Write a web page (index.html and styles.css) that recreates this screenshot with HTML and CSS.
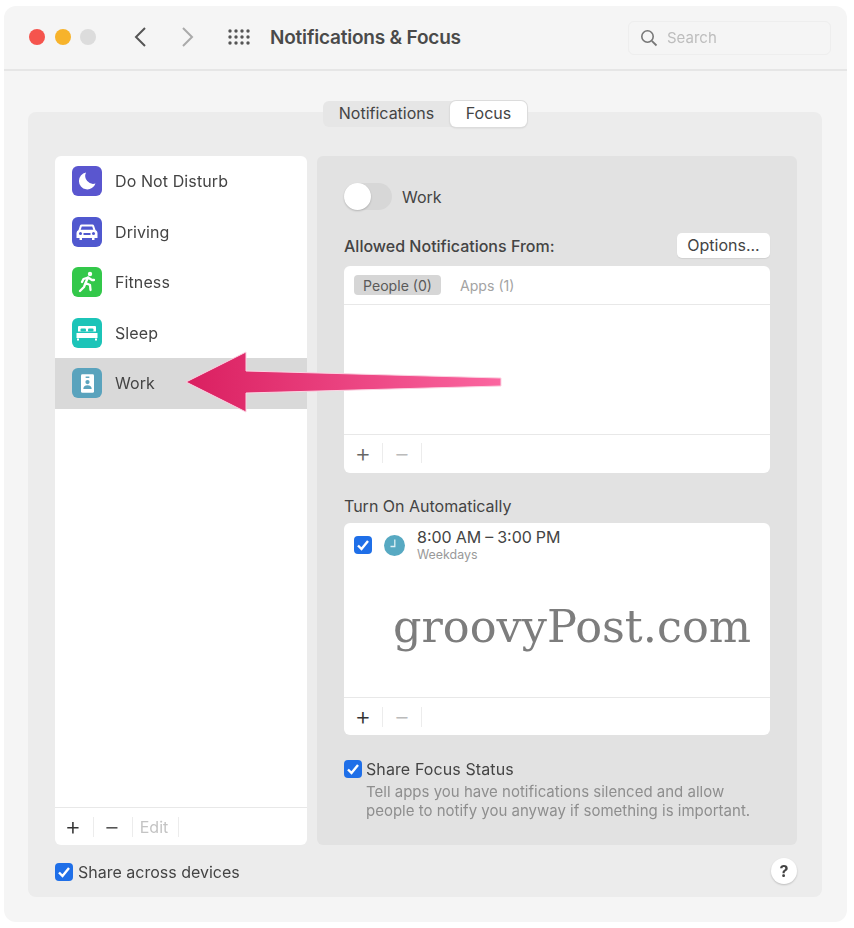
FILE: index.html
```html
<!DOCTYPE html>
<html lang="en">
<head>
<meta charset="utf-8">
<title>Notifications &amp; Focus</title>
<link rel="stylesheet" href="styles.css">
</head>
<body>
<div class="window">
  <header class="titlebar">
    <div class="lights"><i class="light red"></i><i class="light yellow"></i><i class="light gray"></i></div>
    <svg class="chev" width="14" height="22" viewBox="0 0 14 22"><path d="M12 2 L3 11 L12 20" fill="none" stroke="#555" stroke-width="2"/></svg>
    <svg class="chev fwd" width="14" height="22" viewBox="0 0 14 22"><path d="M2 2 L11 11 L2 20" fill="none" stroke="#aaa" stroke-width="2"/></svg>
    <svg class="grid" width="24" height="18" viewBox="0 0 24 18" fill="#555">
      <circle cx="3" cy="3" r="1.7"/><circle cx="9" cy="3" r="1.7"/><circle cx="15" cy="3" r="1.7"/><circle cx="21" cy="3" r="1.7"/>
      <circle cx="3" cy="9" r="1.7"/><circle cx="9" cy="9" r="1.7"/><circle cx="15" cy="9" r="1.7"/><circle cx="21" cy="9" r="1.7"/>
      <circle cx="3" cy="15" r="1.7"/><circle cx="9" cy="15" r="1.7"/><circle cx="15" cy="15" r="1.7"/><circle cx="21" cy="15" r="1.7"/>
    </svg>
    <h1 class="title">Notifications &amp; Focus</h1>
    <div class="search">
      <svg width="18" height="18" viewBox="0 0 18 18"><circle cx="7.5" cy="7.5" r="5.7" fill="none" stroke="#777" stroke-width="1.6"/><path d="M11.8 11.8 L16.5 16.5" stroke="#777" stroke-width="1.8"/></svg>
      <span>Search</span>
    </div>
  </header>
  <main class="content">
    <div class="panel">
      <div class="tabs"><span class="tab">Notifications</span><span class="tab active">Focus</span></div>
      <div class="columns">
        <aside class="sidebar">
          <ul class="focus-list">
            <li class="row">
              <span class="app-icon purple"><svg width="20" height="20" viewBox="0 0 20 20"><path d="M9 1.5 A8.5 8.5 0 1 0 18.5 12.5 A8 8 0 0 1 9 1.5Z" fill="#fff"/></svg></span>Do Not Disturb
            </li>
            <li class="row">
              <span class="app-icon indigo"><svg width="22" height="18" viewBox="0 0 22 18"><path d="M5.5 1.5 H16.5 Q17.6 1.5 18 2.6 L19.5 7 Q21.5 8 21.5 10 V15 H18.5 V17 H16 V15 H6 V17 H3.5 V15 H.5 V10 Q.5 8 2.5 7 L4 2.6 Q4.4 1.5 5.5 1.5Z M5.8 3.5 L4.7 6.8 H17.3 L16.2 3.5Z" fill="#fff" fill-rule="evenodd"/><circle cx="4.5" cy="10.5" r="1.5" fill="#5058cf"/><circle cx="17.5" cy="10.5" r="1.5" fill="#5058cf"/><rect x="7.5" y="10" width="7" height="2" fill="#5058cf"/></svg></span>Driving
            </li>
            <li class="row">
              <span class="app-icon green"><svg width="20" height="22" viewBox="0 0 20 22"><circle cx="13" cy="3" r="2.2" fill="#fff"/><path d="M11 6.5 L8.5 12 M11 6.5 L15 9 L17 9 M11 6.5 L6.500 8 L5 11 M8.5 12 L13 14 L13.5 19 M8.5 12 L7 16 L3 20" fill="none" stroke="#fff" stroke-width="2.300" stroke-linecap="round" stroke-linejoin="round"/></svg></span>Fitness
            </li>
            <li class="row">
              <span class="app-icon teal"><svg width="22" height="16" viewBox="0 0 22 16"><path d="M3 1 H19 Q20 1 20 2 V6.5 H2 V2 Q2 1 3 1Z M.5 8 H21.5 V13 H.5Z M1 13.5 H3 V15.5 H1Z M19 13.5 H21 V15.5 H19Z" fill="#fff"/><rect x="4.5" y="3.5" width="5.5" height="3" rx="1" fill="#1cc4b8"/><rect x="12" y="3.5" width="5.5" height="3" rx="1" fill="#1cc4b8"/></svg></span>Sleep
            </li>
            <li class="row selected">
              <span class="app-icon slate"><svg width="13" height="19" viewBox="0 0 14 20"><rect width="14" height="20" rx="1.5" fill="#fff"/><rect x="5" y="2.5" width="4" height="1.5" fill="#5aa3bd"/><circle cx="7" cy="8.5" r="2.3" fill="#5aa3bd"/><path d="M2.5 16 Q2.5 11.8 7 11.8 Q11.5 11.8 11.5 16Z" fill="#5aa3bd"/></svg></span>Work
            </li>
          </ul>
          <footer class="toolbar side-toolbar">
            <span class="tool plus">+</span><i class="sep"></i>
            <span class="tool minus">&minus;</span><i class="sep"></i>
            <span class="tool edit">Edit</span><i class="sep"></i>
          </footer>
        </aside>
        <section class="detail">
          <div class="switch-row"><span class="switch"><i class="knob"></i></span><span>Work</span></div>
          <div class="allowed-head"><span class="strong">Allowed Notifications From:</span><button class="options">Options...</button></div>
          <div class="card people-card">
            <div class="card-tabs"><span class="pill">People (0)</span><span class="pill-off">Apps (1)</span></div>
            <div class="card-body"></div>
            <footer class="toolbar card-toolbar">
              <span class="tool plus soft">+</span><i class="sep"></i>
              <span class="tool minus off">&minus;</span><i class="sep"></i>
            </footer>
          </div>
          <div class="auto-head">Turn On Automatically</div>
          <div class="card auto-card">
            <div class="schedule">
              <svg class="check" width="18" height="18" viewBox="0 0 18 18"><rect width="18" height="18" rx="4" fill="#1f6fe8"/><path d="M4 9.5 L7.5 13 L14 5" fill="none" stroke="#fff" stroke-width="2.4"/></svg>
              <svg class="clock" width="21" height="21" viewBox="0 0 21 21"><circle cx="10.5" cy="10.5" r="10.5" fill="#57a9c2"/><path d="M10.8 4.5 V11.5 H6.5" fill="none" stroke="#dff0f5" stroke-width="1.3"/></svg>
              <div class="sched-text"><div class="sched-time">8:00 AM – 3:00 PM</div><div class="sched-days">Weekdays</div></div>
            </div>
            <div class="card-body"></div>
            <footer class="toolbar card-toolbar short">
              <span class="tool plus">+</span><i class="sep"></i>
              <span class="tool minus off">&minus;</span><i class="sep"></i>
            </footer>
          </div>
          <div class="share-focus">
            <svg class="check" width="18" height="18" viewBox="0 0 18 18"><rect width="18" height="18" rx="4" fill="#1f6fe8"/><path d="M4 9.5 L7.5 13 L14 5" fill="none" stroke="#fff" stroke-width="2.4"/></svg>
            <div>
              <div class="share-title">Share Focus Status</div>
              <p class="share-desc">Tell apps you have notifications silenced and allow<br>people to notify you anyway if something is important.</p>
            </div>
          </div>
        </section>
      </div>
      <div class="bottom">
        <label class="across">
          <svg class="check" width="18" height="18" viewBox="0 0 18 18"><rect width="18" height="18" rx="4" fill="#1f6fe8"/><path d="M4 9.5 L7.5 13 L14 5" fill="none" stroke="#fff" stroke-width="2.4"/></svg>
          Share across devices
        </label>
        <span class="help">?</span>
      </div>
    </div>
  </main>
</div>
<div class="watermark">groovyPost.com</div>
<svg class="arrow" width="330" height="70" viewBox="180 347 330 70">
  <defs><linearGradient id="arrowFill" x1="0" x2="1" y1="0" y2="0"><stop offset="0" stop-color="#da1f60"/><stop offset="1" stop-color="#fb66a0"/></linearGradient></defs>
  <path d="M186 382 L246 352 V371 L501 378 V386 L246 393 V412 Z" fill="url(#arrowFill)" stroke="#fbd3e2" stroke-width="1"/>
</svg>
</body>
</html>
```
FILE: styles.css
```css
* { box-sizing: border-box; }
html, body { margin: 0; padding: 0; background: #fff; }
body {
  position: relative;
  width: 854px;
  height: 928px;
  padding: 6px 7px 6px 4px;
  font-family: Inter, "Liberation Sans", sans-serif;
  font-size: 16px;
  color: #444;
  overflow: hidden;
}
.window {
  height: 916px;
  background: #f5f5f5;
  border-radius: 12px;
  display: flex;
  flex-direction: column;
  filter: blur(.35px);
}
.titlebar {
  height: 65px;
  flex: none;
  display: flex;
  align-items: center;
  border-bottom: 2px solid #e6e6e6;
  padding-left: 25px;
  padding-bottom: 2px;
}
.lights { display: flex; gap: 9.5px; }
.light { width: 16px; height: 16px; border-radius: 50%; display: block; }
.red { background: #f5544d; }
.yellow { background: #f7b32b; }
.gray { background: #dcdcdc; }
.chev { margin-left: 37px; }
.chev.fwd { margin-left: 34px; }
.grid { margin-left: 32px; }
.title {
  margin: 1px 0 0 19px;
  font-size: 19px;
  font-weight: 600;
  color: #4a4a4a;
  letter-spacing: -.2px;
}
.search {
  margin: 2px 16px 0 auto;
  width: 203px;
  height: 34px;
  border: 1px solid #eeeeee;
  border-radius: 6px;
  display: flex;
  align-items: center;
  padding-left: 11px;
  gap: 9px;
  font-size: 15px;
  color: #bdbdbd;
}
.content { flex: 1; padding: 41px 25px 25px 24px; }
.panel {
  position: relative;
  height: 785px;
  background: #ececec;
  border-radius: 8px;
  padding: 44px 25px 0 27px;
}
.tabs {
  position: absolute;
  top: -11px;
  left: 295px;
  width: 204px;
  height: 26px;
  display: flex;
  background: #e6e6e6;
  border-radius: 6px;
  font-size: 16px;
  color: #444;
}
.tab { display: flex; align-items: center; justify-content: center; width: 127px; padding-bottom: 2px; }
.tab.active {
  width: 77px;
  background: #fff;
  border-radius: 6px;
  box-shadow: 0 0 0 1px #dcdcdc, 0 1px 2px rgba(0,0,0,.15);
}
.columns { display: flex; gap: 10px; height: 689px; }
.sidebar {
  width: 252px;
  background: #fff;
  border-radius: 6px;
  display: flex;
  flex-direction: column;
  overflow: hidden;
}
.focus-list { list-style: none; margin: 0; padding: 0; flex: 1; }
.row {
  height: 50.5px;
  display: flex;
  align-items: center;
  padding-left: 17px;
  gap: 13px;
  color: #444;
  letter-spacing: .1px;
}
.row.selected { background: #d9d9d9; }
.app-icon {
  width: 30px;
  height: 30px;
  border-radius: 6px;
  display: flex;
  align-items: center;
  justify-content: center;
}
.purple { background: #5a56cf; }
.indigo { background: #5058cf; }
.green { background: #33c84a; }
.teal { background: #1cc4b8; }
.slate { background: #5aa3bd; }
.toolbar {
  display: flex;
  align-items: center;
  flex: none;
  border-top: 1px solid #e8e8e8;
}
.side-toolbar { height: 38px; }
.tool { display: flex; justify-content: center; }
.plus { font-size: 25px; font-weight: 300; color: #333; width: 38px; line-height: 1; }
.minus { font-size: 25px; font-weight: 300; color: #555; width: 38px; line-height: 1; }
.edit { color: #c4c4c4; width: 45px; padding-right: 3px; }
.side-toolbar .plus, .side-toolbar .minus { padding-right: 2px; }
.sep { width: 1px; height: 20px; background: #ececec; display: block; }
.plus.soft { color: #666; }
.minus.off { color: #bbb; }
.detail {
  width: 480px;
  background: #e2e2e2;
  border-radius: 6px;
  padding: 27px 27px 0;
  display: flex;
  flex-direction: column;
}
.switch-row { display: flex; align-items: center; gap: 10px; height: 27px; }
.switch { width: 48px; height: 27px; background: #d7d7d7; border-radius: 14px; display: block; }
.knob { width: 27px; height: 27px; display: block; background: #fff; border-radius: 50%; box-shadow: 0 1px 2px rgba(0,0,0,.2); }
.allowed-head { display: flex; justify-content: space-between; align-items: center; margin-top: 23px; height: 25px; }
.strong { font-weight: 500; color: #444; }
.options {
  width: 93px;
  height: 25px;
  padding: 0 0 2px;
  border: 0;
  border-radius: 5px;
  background: #fff;
  font: 16px Inter, "Liberation Sans", sans-serif;
  color: #444;
  box-shadow: 0 1px 1px rgba(0,0,0,.08);
}
.card {
  background: #fff;
  border-radius: 6px;
  display: flex;
  flex-direction: column;
}
.people-card { height: 207px; margin-top: 8px; }
.card-tabs {
  height: 39px;
  flex: none;
  display: flex;
  align-items: center;
  padding-left: 10px;
  gap: 19px;
  border-bottom: 1px solid #e8e8e8;
  font-size: 14.1px;
}
.pill { background: #d6d6d6; border-radius: 4px; width: 87px; height: 20px; display: flex; align-items: center; justify-content: center; color: #5a5a5a; }
.pill-off { color: #a3a3a3; }
.card-body { flex: 1; }
.card-toolbar { height: 39px; padding-bottom: 2px; }
.card-toolbar.short { height: 38px; padding-bottom: 0; }
.auto-head { margin-top: 23px; height: 20px; line-height: 20px; color: #444; }
.auto-card { height: 212px; margin-top: 7px; }
.schedule { display: flex; align-items: flex-start; padding: 5px 0 0 10px; }
.schedule .check { margin-top: 8px; }
.clock { margin: 7px 0 0 12px; }
.sched-text { margin-left: 12px; }
.sched-time { font-size: 16px; line-height: 18px; color: #444; word-spacing: -.5px; }
.sched-days { font-size: 12.4px; line-height: 18px; color: #999; }
.share-focus { display: flex; margin-top: 25px; gap: 4px; }
.share-title { line-height: 18px; color: #444; letter-spacing: .1px; }
.share-desc { margin: 4px 0 0; font-size: 15px; line-height: 19px; color: #8e8e8e; white-space: nowrap; }
.bottom { display: flex; align-items: center; justify-content: space-between; height: 52px; padding-top: 2px; }
.across { display: flex; align-items: center; gap: 5px; color: #444; }
.help {
  width: 26px;
  height: 26px;
  margin-top: -2px;
  border-radius: 50%;
  background: #fff;
  display: flex;
  align-items: center;
  justify-content: center;
  font-weight: 700;
  font-size: 16px;
  color: #444;
  box-shadow: 0 1px 2px rgba(0,0,0,.2);
}
.watermark {
  position: absolute;
  left: 393px;
  top: 597px;
  font-family: "DejaVu Serif", serif;
  font-size: 44.6px;
  line-height: 60px;
  color: #7d7d7d;
  white-space: nowrap;
  filter: blur(.35px);
}
.arrow { position: absolute; left: 180px; top: 347px; }
```
